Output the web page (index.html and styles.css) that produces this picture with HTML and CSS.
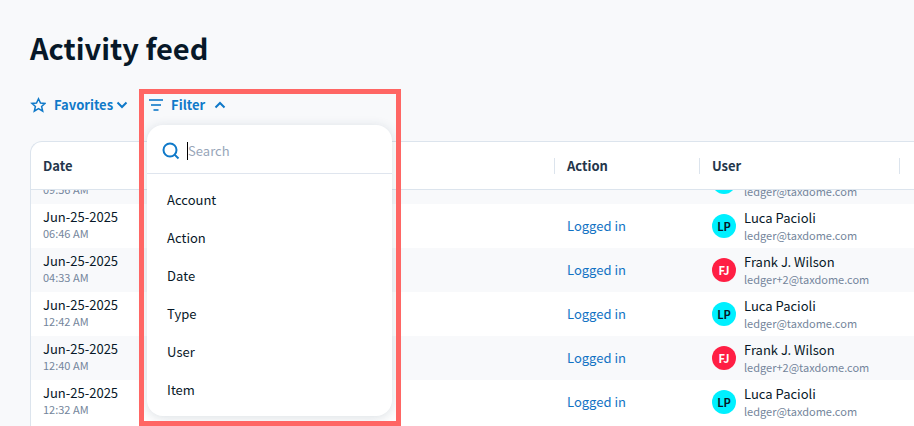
FILE: index.html
```html
<!DOCTYPE html>
<html lang="en">
<head>
<meta charset="utf-8">
<title>Activity feed</title>
<link rel="stylesheet" href="styles.css">
</head>
<body>
<main class="page">
  <h1 class="title">Activity feed</h1>
  <div class="toolbar">
    <button class="tool" type="button">
      <svg class="icon" viewBox="0 0 16 16"><path d="M8.500 1.800l2 4.200 4.600.4-3.500 3.100 1.100 4.700-4.200-2.500-4.200 2.500 1.100-4.700L1.900 6.400l4.600-.4z" stroke-width="1.500"/></svg>
      <span>Favorites</span>
      <svg class="chevron" viewBox="0 0 12 12"><path d="M1.500 3.500L6 8l4.500-4.500"/></svg>
    </button>
    <div class="filter">
      <button class="tool" type="button" aria-expanded="true">
        <svg class="icon icon-filter" viewBox="0 0 14 14"><path d="M0 2h14M2 7h10M4.500 12h5"/></svg>
        <span>Filter</span>
        <svg class="chevron chevron-up" viewBox="0 0 12 12"><path d="M1.500 8.500L6 4l4.500 4.500"/></svg>
      </button>
      <div class="menu">
        <label class="search">
          <svg class="search-icon" viewBox="0 0 18 18"><circle cx="8" cy="8" r="6.500"/><path d="M12.600 12.600L16.500 16.500"/></svg>
          <input type="text" placeholder="Search" aria-label="Search">
        </label>
        <ul class="options">
          <li><button type="button">Account</button></li>
          <li><button type="button">Action</button></li>
          <li><button type="button">Date</button></li>
          <li><button type="button">Type</button></li>
          <li><button type="button">User</button></li>
          <li><button type="button">Item</button></li>
        </ul>
      </div>
      <div class="highlight"></div>
    </div>
  </div>
  <div class="card">
    <table>
      <colgroup><col class="col-date"><col class="col-action"><col class="col-user"><col></colgroup>
      <thead>
        <tr><th><span>Date</span></th><th><span>Action</span></th><th><span>User</span></th><th><span></span></th></tr>
      </thead>
      <tbody>
        <tr class="clipped">
          <td><div class="cell"><small>09:56 AM</small></div></td>
          <td></td>
          <td><div class="cell"><span class="avatar lp"></span><div class="person"><small>ledger@taxdome.com</small></div></div></td>
          <td></td>
        </tr>
        <tr>
          <td><div class="cell"><div class="stack">Jun-25-2025<small>06:46 AM</small></div></div></td>
          <td><a href="#">Logged in</a></td>
          <td><div class="cell"><span class="avatar lp">LP</span><div class="person">Luca Pacioli<small>ledger@taxdome.com</small></div></div></td>
          <td></td>
        </tr>
        <tr>
          <td><div class="cell"><div class="stack">Jun-25-2025<small>04:33 AM</small></div></div></td>
          <td><a href="#">Logged in</a></td>
          <td><div class="cell"><span class="avatar fj">FJ</span><div class="person">Frank J. Wilson<small>ledger+2@taxdome.com</small></div></div></td>
          <td></td>
        </tr>
        <tr>
          <td><div class="cell"><div class="stack">Jun-25-2025<small>12:42 AM</small></div></div></td>
          <td><a href="#">Logged in</a></td>
          <td><div class="cell"><span class="avatar lp">LP</span><div class="person">Luca Pacioli<small>ledger@taxdome.com</small></div></div></td>
          <td></td>
        </tr>
        <tr>
          <td><div class="cell"><div class="stack">Jun-25-2025<small>12:40 AM</small></div></div></td>
          <td><a href="#">Logged in</a></td>
          <td><div class="cell"><span class="avatar fj">FJ</span><div class="person">Frank J. Wilson<small>ledger+2@taxdome.com</small></div></div></td>
          <td></td>
        </tr>
        <tr>
          <td><div class="cell"><div class="stack">Jun-25-2025<small>12:32 AM</small></div></div></td>
          <td><a href="#">Logged in</a></td>
          <td><div class="cell"><span class="avatar lp">LP</span><div class="person">Luca Pacioli<small>ledger@taxdome.com</small></div></div></td>
          <td></td>
        </tr>
      </tbody>
    </table>
  </div>
</main>
</body>
</html>
```
FILE: styles.css
```css
* { box-sizing: border-box; }
body {
  margin: 0;
  background: #f8f9fb;
  color: #071828;
  font: 13px/16px "Noto Sans CJK SC", "Open Sans", sans-serif;
}
button, input { font: inherit; color: inherit; }
button { border: 0; padding: 0; background: none; text-align: left; }
a { color: #1373c4; text-decoration: none; }
.page {
  height: 100vh;
  padding: 27px 0 0 30px;
  display: flex;
  flex-direction: column;
  overflow: hidden;
}
.title { margin: 0; font-size: 29px; line-height: 40px; font-weight: 700; }
.toolbar { display: flex; gap: 20px; margin: 26px 0 24px; align-items: center; }
.tool {
  display: flex;
  align-items: center;
  gap: 8px;
  height: 24px;
  color: #0f79c9;
  font-weight: 700;
}
.tool .chevron { margin-left: -5px; margin-right: 1px; }
.tool .chevron-up { margin-left: 1px; }
svg { fill: none; stroke: #0f79c9; flex: none; }
.icon { width: 16px; height: 16px; }
.icon-filter { stroke-width: 2; opacity: 0.8; width: 14px; height: 14px; }
.chevron { width: 12px; height: 12px; stroke-width: 2; }
.filter { position: relative; }
.menu {
  position: absolute;
  z-index: 2;
  top: 32px;
  left: -2px;
  width: 245px;
  background: #fff;
  border-radius: 16px;
  box-shadow: 0 2px 12px rgba(30, 60, 90, 0.16);
}
.search {
  display: flex;
  align-items: center;
  gap: 7px;
  height: 49px;
  padding: 3px 15px 0;
  border-bottom: 1px solid #dfe5ee;
}
.search-icon { width: 18px; height: 18px; stroke-width: 2; }
.search input {
  flex: 1;
  min-width: 0;
  height: 18px;
  padding: 0;
  border: 0;
  border-left: 1px solid #000;
  outline: 0;
  background: none;
  caret-color: transparent;
}
.search input::placeholder { color: #98a6b9; opacity: 1; }
.options { list-style: none; margin: 0; padding: 7px 0; }
.options button { width: 100%; height: 38px; padding: 0 20px; display: block; }
.highlight {
  position: absolute;
  z-index: 3;
  top: -4px;
  left: -10px;
  width: 262px;
  height: 337px;
  border: 5px solid #ff6664;
  pointer-events: none;
}
.card {
  flex: 1;
  background: #fff;
  border: 1px solid #dce4ed;
  border-width: 1px 0 0 1px;
  border-radius: 12px 0 0 0;
  overflow: hidden;
}
table { width: 100%; table-layout: fixed; border-collapse: separate; border-spacing: 0; }
.col-date { width: 524px; }
.col-action { width: 145px; }
.col-user { width: 200px; }
th, td { padding: 0 0 0 12px; text-align: left; vertical-align: middle; }
th { height: 48px; border-bottom: 1px solid #dce4ed; color: #24364b; font-weight: 700; }
th + th { padding-left: 0; }
th span { display: block; height: 16px; }
th + th span { border-left: 1px solid #dce4ed; padding-left: 12px; margin-left: -1px; }
td { height: 44px; }
tbody tr:nth-child(odd) { background: #f8f9fb; }
.cell { display: flex; align-items: center; gap: 8px; height: 44px; }
small { display: block; font-size: 11px; line-height: 16px; color: #74859b; }
.stack { padding-bottom: 2px; }
.person { padding-top: 2px; }
.person small { line-height: 19px; }
.avatar {
  width: 24px;
  height: 24px;
  border-radius: 50%;
  font-size: 11px;
  line-height: 24px;
  font-weight: 700;
  text-align: center;
}
.lp { background: #00f0ff; color: #071828; }
.fj { background: #ff1f44; color: #fff; }
.clipped td { height: 14px; }
.clipped .cell { height: 14px; overflow: hidden; align-items: flex-end; }
.clipped small { margin-bottom: 7px; }
.clipped .person small { margin-bottom: 3px; }
.clipped .avatar { margin-bottom: 10px; }
```
